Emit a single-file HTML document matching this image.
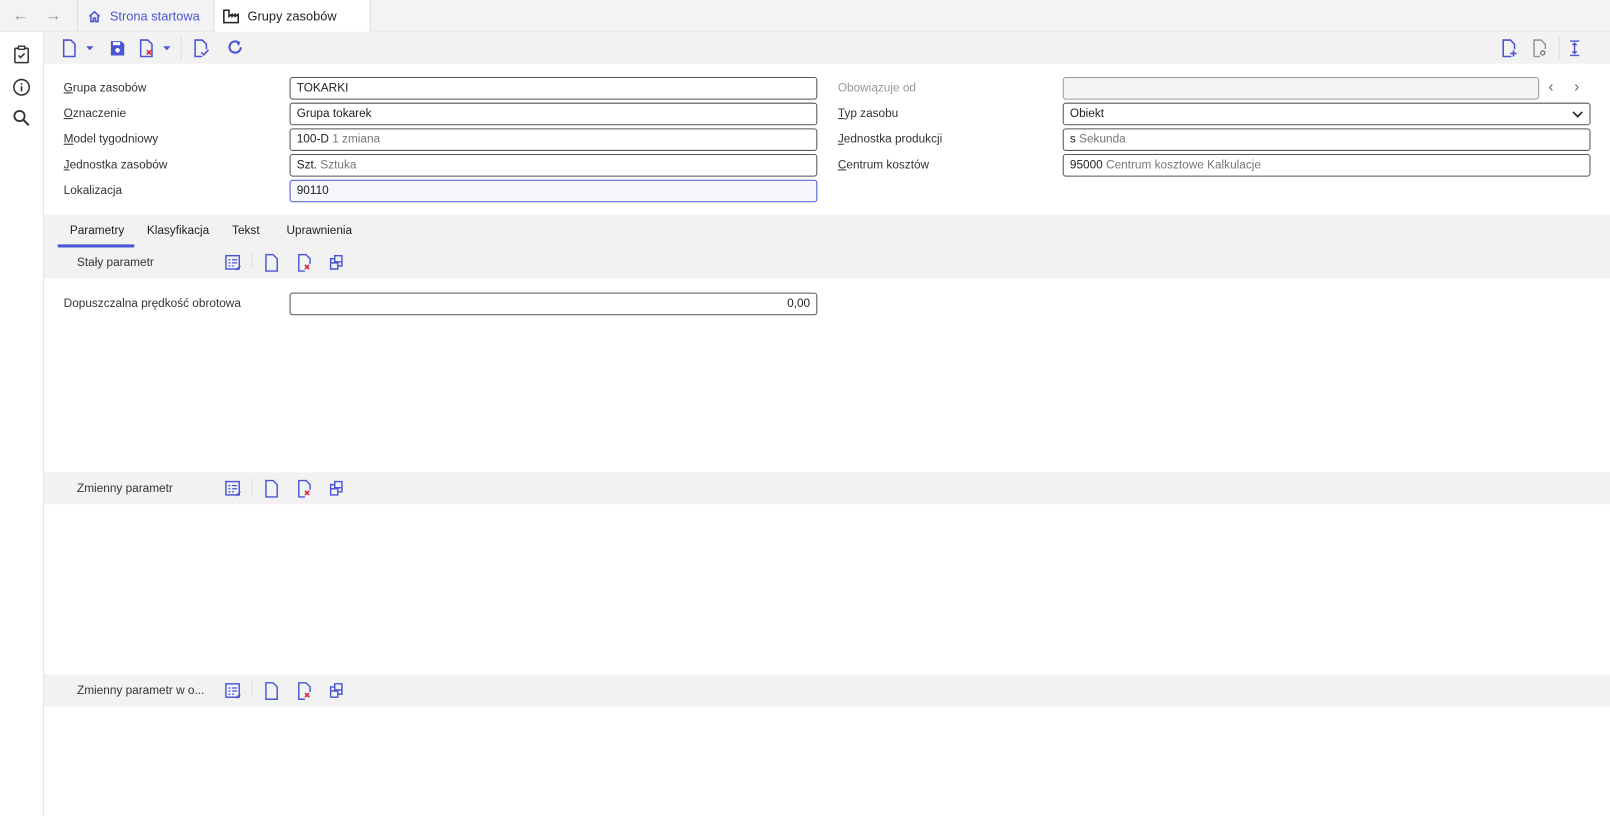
<!DOCTYPE html>
<html><head><meta charset="utf-8"><style>
*{box-sizing:border-box;margin:0;padding:0}
html,body{width:1610px;height:815px;overflow:hidden}
body{background:#f3f3f5;font-family:"Liberation Sans",sans-serif;font-size:11.5px;color:#333}
#w{position:absolute;left:0;top:0;width:1568px;height:794px;transform:scale(1.02679);transform-origin:0 0}
.abs{position:absolute}
.top{left:0;top:0;width:1568px;height:31px;background:#f3f3f5;border-bottom:1px solid #e4e4e8}
.tab{top:0;height:31px;display:flex;align-items:center;font-size:12.5px;border-right:1px solid #ddd}
.side{left:0;top:31px;width:43px;height:764px;background:#fff;border-right:1px solid #e2e2e2}
.main{left:43px;top:31px;width:1525px;height:764px;background:#fff}
.bar{left:43px;width:1525px;height:31px;background:#f2f2f2}
.lbl{font-size:11.5px;color:#333}
.lbl u{text-decoration:underline}
.inp{height:22px;border:1px solid #555;border-radius:3px;background:#fff;padding:0 6px;line-height:20px;font-size:11.5px;color:#222}
.inp .g{color:#777}
svg{display:block}
</style></head><body><div id="w">
<div class="abs top"></div>
<div class="abs" style="left:12px;top:7px;color:#999;font-size:16px">&#8592;</div>
<div class="abs" style="left:44px;top:7px;color:#999;font-size:16px">&#8594;</div>
<div class="abs tab" style="left:75px;width:134px;border-left:1px solid #ddd;padding-left:9px;color:#4a55d6">
<svg width="14" height="14" viewBox="0 0 14 14"><path d="M2 7L7 2.5L12 7M3.5 6v6h2.5v-3.5h2v3.5h2.5v-6" fill="none" stroke="#4a55d6" stroke-width="1.5"/></svg><span style="margin-left:8px">Strona startowa</span></div>
<div class="abs tab" style="left:209px;width:152px;background:#fff;padding-left:8px;color:#222">
<svg width="16" height="14" viewBox="0 0 16 14"><path d="M1 1v12h14V5l-3 2V5l-3 2V5l-3 2V1z" fill="none" stroke="#222" stroke-width="1.5"/></svg><span style="margin-left:8px">Grupy zasobów</span></div>
<div class="abs side"></div>
<svg class="abs" style="left:12px;top:44px" width="18" height="18" viewBox="0 0 18 18"><rect x="2.5" y="3" width="13" height="14" rx="1" fill="none" stroke="#333" stroke-width="1.5"/><rect x="6" y="1" width="6" height="3" fill="#fff" stroke="#333" stroke-width="1.3"/><path d="M6 10l2 2 4-4" fill="none" stroke="#333" stroke-width="1.5"/></svg>
<svg class="abs" style="left:12px;top:76px" width="18" height="18" viewBox="0 0 18 18"><circle cx="9" cy="9" r="7.5" fill="none" stroke="#333" stroke-width="1.5"/><path d="M9 8v5M9 5v1.5" stroke="#333" stroke-width="1.6"/></svg>
<svg class="abs" style="left:12px;top:106px" width="18" height="18" viewBox="0 0 18 18"><circle cx="7" cy="7" r="5" fill="none" stroke="#333" stroke-width="1.8"/><path d="M11 11l5 5" stroke="#333" stroke-width="2"/></svg>
<div class="abs main"></div>
<div class="abs bar" style="top:31px"></div>
<svg class="abs" style="left:60px;top:38px" width="120" height="18" viewBox="0 0 120 18"><path d="M2 1h7l4 4v12H2z" fill="none" stroke="#4a55d6" stroke-width="1.5"/><path d="M24 7h7l-3.5 4z" fill="#4a55d6"/><path d="M48 2h10l3 3v11H48z" fill="#4a55d6"/><circle cx="54.5" cy="11" r="2.2" fill="#fff"/><rect x="50" y="3" width="7" height="3" fill="#fff"/><path d="M77 1h7l4 4v12H77z" fill="none" stroke="#4a55d6" stroke-width="1.5"/><path d="M83 11l4 4M87 11l-4 4" stroke="#e0243a" stroke-width="1.6"/><path d="M99 7h7l-3.5 4z" fill="#4a55d6"/></svg>
<div class="abs" style="left:176px;top:36px;width:1px;height:22px;background:#ddd"></div>
<svg class="abs" style="left:188px;top:38px" width="60" height="18" viewBox="0 0 60 18"><path d="M9 17H2V1h7l4 4v5" fill="none" stroke="#4a55d6" stroke-width="1.5"/><path d="M8 13l2.5 2.5 4.5-5" fill="none" stroke="#4a55d6" stroke-width="1.5"/><path d="M45 4a5.5 5.5 0 1 0 1.5 4" fill="none" stroke="#4a55d6" stroke-width="2"/><path d="M41 1.5l5 1.5-1.5 4z" fill="#4a55d6"/></svg>
<svg class="abs" style="left:1462px;top:38px" width="80" height="18" viewBox="0 0 80 18"><path d="M10 17H2V1h7l4 4v5" fill="none" stroke="#4a55d6" stroke-width="1.5"/><path d="M12 11v6M9 14h6" stroke="#4a55d6" stroke-width="1.6"/><path d="M38 17h-6V1h7l4 4v5" fill="none" stroke="#999" stroke-width="1.5"/><circle cx="40.5" cy="13.5" r="2" fill="none" stroke="#777" stroke-width="1.3"/><path d="M67 2h9M67 16h9M71.5 4v10M69.5 6l2-2 2 2M69.5 12l2 2 2-2" fill="none" stroke="#4a55d6" stroke-width="1.4"/></svg>
<div class="abs" style="left:1518px;top:36px;width:1px;height:22px;background:#ddd"></div>
<div class="abs lbl" style="left:62px;top:80px"><u>G</u>rupa zasobów</div>
<div class="abs lbl" style="left:62px;top:105px"><u>O</u>znaczenie</div>
<div class="abs lbl" style="left:62px;top:130px"><u>M</u>odel tygodniowy</div>
<div class="abs lbl" style="left:62px;top:155px"><u>J</u>ednostka zasobów</div>
<div class="abs lbl" style="left:62px;top:180px">Lokalizacja</div>
<div class="abs inp" style="left:282px;top:75px;width:514px">TOKARKI</div>
<div class="abs inp" style="left:282px;top:100px;width:514px">Grupa tokarek</div>
<div class="abs inp" style="left:282px;top:125px;width:514px">100-D <span class="g">1 zmiana</span></div>
<div class="abs inp" style="left:282px;top:150px;width:514px">Szt. <span class="g">Sztuka</span></div>
<div class="abs inp" style="left:282px;top:175px;width:514px;border-color:#4a55d6;background:#f6f7fb">90110</div>
<div class="abs lbl" style="left:816px;top:80px;color:#999">Obowiązuje od</div>
<div class="abs lbl" style="left:816px;top:105px"><u>T</u>yp zasobu</div>
<div class="abs lbl" style="left:816px;top:130px"><u>J</u>ednostka produkcji</div>
<div class="abs lbl" style="left:816px;top:155px"><u>C</u>entrum kosztów</div>
<div class="abs inp" style="left:1035px;top:75px;width:464px;background:#f4f4f6;border-color:#999"></div>
<div class="abs" style="left:1508px;top:76px;color:#666;font-size:15px">&#8249;</div>
<div class="abs" style="left:1533px;top:76px;color:#666;font-size:15px">&#8250;</div>
<div class="abs inp" style="left:1035px;top:100px;width:514px">Obiekt<svg style="position:absolute;right:6px;top:7px" width="11" height="7" viewBox="0 0 11 7"><path d="M1 1l4.5 4.5L10 1" fill="none" stroke="#222" stroke-width="1.6"/></svg></div>
<div class="abs inp" style="left:1035px;top:125px;width:514px">s <span class="g">Sekunda</span></div>
<div class="abs inp" style="left:1035px;top:150px;width:514px">95000 <span class="g">Centrum kosztowe Kalkulacje</span></div>
<div class="abs bar" style="top:209px;height:62px"></div>
<div class="abs" style="left:68px;top:219px;color:#222">Parametry</div>
<div class="abs" style="left:56px;top:238px;width:75px;height:3px;background:#4a55d6;border-radius:2px"></div>
<div class="abs" style="left:143px;top:219px;color:#222">Klasyfikacja</div>
<div class="abs" style="left:226px;top:219px;color:#222">Tekst</div>
<div class="abs" style="left:279px;top:219px;color:#222">Uprawnienia</div>
<div class="abs bar" style="top:460px"></div>
<div class="abs bar" style="top:657px"></div>
<div class="abs" style="left:75px;top:250px">Stały parametr</div>
<div class="abs" style="left:75px;top:470px">Zmienny parametr</div>
<div class="abs" style="left:75px;top:667px">Zmienny parametr w o...</div>
<svg width="0" height="0" style="position:absolute"><defs><g id="ic"><rect x="1" y="2" width="13" height="13" fill="none" stroke="#4a55d6" stroke-width="1.4"/><path d="M3.5 6h2M7 6h5M3.5 9h2M7 9h5M3.5 12h2M7 12h2" stroke="#4a55d6" stroke-width="1.2"/><path d="M11 16l4-4" stroke="#4a55d6" stroke-width="1.5"/><rect x="26" y="-9" width="1" height="24" fill="#ddd"/><path d="M40 1h7l4 4v12H40z" fill="none" stroke="#4a55d6" stroke-width="1.4"/><path d="M78 17h-6V1h7l4 4v5" fill="none" stroke="#4a55d6" stroke-width="1.4"/><path d="M78 11l4 4M82 11l-4 4" stroke="#e0243a" stroke-width="1.6"/><path d="M107 2h7v6h-7zM103 9h7v6h-7zM107 5h-4v4M110 12h4v-4" fill="none" stroke="#4a55d6" stroke-width="1.4"/></g></defs></svg>
<svg class="abs" style="left:219px;top:247px" width="120" height="18" viewBox="0 0 120 18"><use href="#ic"/></svg>
<svg class="abs" style="left:219px;top:467px" width="120" height="18" viewBox="0 0 120 18"><use href="#ic"/></svg>
<svg class="abs" style="left:219px;top:664px" width="120" height="18" viewBox="0 0 120 18"><use href="#ic"/></svg>
<div class="abs lbl" style="left:62px;top:290px">Dopuszczalna prędkość obrotowa</div>
<div class="abs inp" style="left:282px;top:285px;width:514px;text-align:right">0,00</div>
</div></body></html>
